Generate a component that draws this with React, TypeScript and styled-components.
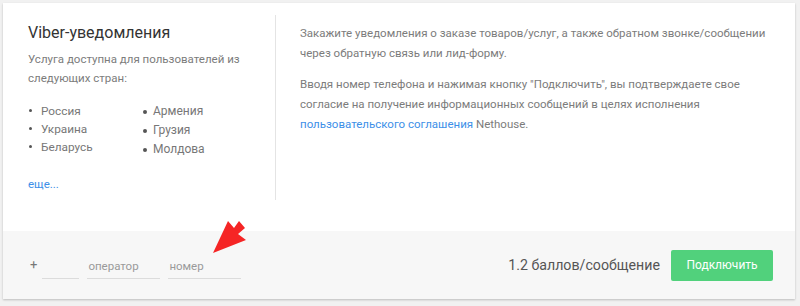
import styled, { createGlobalStyle } from 'styled-components';

const GlobalStyle = createGlobalStyle`
  html, body {
    margin: 0;
    padding: 0;
    background: #f1f1f1;
  }
  body {
    font-family: Roboto, 'Noto Sans', Arial, sans-serif;
  }
`;

const Page = styled.div`
  padding: 3px 5px 7px 3px;
  position: relative;
`;

const Card = styled.div`
  background: #fff;
  box-shadow: 0 1px 2px rgba(0, 0, 0, 0.22);
  display: flex;
  flex-direction: column;
  height: 296px;
`;

const Top = styled.div`
  display: flex;
  padding: 12px 0 0;
  height: 216px;
`;

const LeftCol = styled.div`
  width: 273px;
  padding: 0 30px 0 25px;
  height: 185px;
  border-right: 1px solid #e4e4e4;
  box-sizing: border-box;
`;

const RightCol = styled.div`
  flex: 1;
  padding: 8px 20px 0 24px;
`;

const Title = styled.h2`
  margin: 7px 0 6px;
  font-size: 16px;
  font-weight: 400;
  color: #333;
  line-height: 22px;
`;

const Text = styled.p`
  margin: 0;
  font-size: 11.5px;
  line-height: 19px;
  color: #7c7c7c;
`;

const Paragraph = styled(Text)`
  line-height: 20px;
  & + & {
    margin-top: 11px;
  }
`;

const Countries = styled.div`
  display: flex;
  margin-top: 14px;
`;

const CountryList = styled.ul<{ $big?: boolean }>`
  list-style: none;
  margin: 0;
  padding: 0;
  width: ${(p) => (p.$big ? 'auto' : '114px')};
  li {
    position: relative;
    padding-left: ${(p) => (p.$big ? '11px' : '13px')};
    font-size: ${(p) => (p.$big ? '12px' : '11.8px')};
    line-height: ${(p) => (p.$big ? '19px' : '18px')};
    color: #777;
  }
  li::before {
    content: '';
    position: absolute;
    left: 1px;
    top: 50%;
    width: ${(p) => (p.$big ? '4px' : '3px')};
    height: ${(p) => (p.$big ? '4px' : '3px')};
    margin-top: -2px;
    border-radius: 50%;
    background: #555;
  }
`;

const Link = styled.a`
  color: #3d8fe8;
  text-decoration: none;
  font-size: 11.5px;
`;

const More = styled(Link)`
  display: inline-block;
  margin-top: 18px;
`;

const Footer = styled.div`
  background: #f7f7f7;
  height: 68px;
  display: flex;
  align-items: center;
  justify-content: space-between;
  padding: 0 22px 0 27px;
`;

const Phone = styled.div`
  display: flex;
  align-items: flex-end;
  gap: 8px;
  margin-top: 5px;
`;

const Plus = styled.span`
  font-size: 13px;
  color: #777;
  padding-bottom: 7px;
  margin-right: -3px;
`;

const Field = styled.input<{ $w: number }>`
  width: ${(p) => p.$w}px;
  border: none;
  border-bottom: 1px solid #dcdcdc;
  background: transparent;
  font-family: inherit;
  font-size: 11.5px;
  color: #555;
  padding: 0 0 5px 1px;
  outline: none;
  &::placeholder {
    color: #9a9a9a;
  }
`;

const Actions = styled.div`
  display: flex;
  align-items: center;
  gap: 11px;
`;

const Price = styled.span`
  font-size: 14.2px;
  color: #555;
`;

const Button = styled.button`
  background: #51d17c;
  border: none;
  border-radius: 2px;
  color: #fff;
  font-family: inherit;
  font-size: 12px;
  width: 102px;
  height: 31px;
  cursor: pointer;
`;

const Arrow = styled.svg`
  position: absolute;
  left: 208px;
  top: 216px;
`;

export default function App() {
  return (
    <>
      <GlobalStyle />
      <Page>
        <Card>
          <Top>
            <LeftCol>
              <Title>Viber-уведомления</Title>
              <Text>Услуга доступна для пользователей из следующих стран:</Text>
              <Countries>
                <CountryList>
                  <li>Россия</li>
                  <li>Украина</li>
                  <li>Беларусь</li>
                </CountryList>
                <CountryList $big>
                  <li>Армения</li>
                  <li>Грузия</li>
                  <li>Молдова</li>
                </CountryList>
              </Countries>
              <More href="#">еще...</More>
            </LeftCol>
            <RightCol>
              <Paragraph>
                Закажите уведомления о заказе товаров/услуг, а также обратном звонке/сообщении
                через обратную связь или лид-форму.
              </Paragraph>
              <Paragraph>
                Вводя номер телефона и нажимая кнопку "Подключить", вы подтверждаете свое
                согласие на получение информационных сообщений в целях исполнения{' '}
                <Link href="#">пользовательского соглашения</Link> Nethouse.
              </Paragraph>
            </RightCol>
          </Top>
          <Footer>
            <Phone>
              <Plus>+</Plus>
              <Field $w={36} />
              <Field $w={72} placeholder="оператор" />
              <Field $w={72} placeholder="номер" />
            </Phone>
            <Actions>
              <Price>1.2 баллов/сообщение</Price>
              <Button>Подключить</Button>
            </Actions>
          </Footer>
        </Card>
        <Arrow width="42" height="42" viewBox="0 0 42 42">
          <polygon points="5,37 20,5 26,12 31,5 37,12 30,18 38,24" fill="#f52525" />
        </Arrow>
      </Page>
    </>
  );
}
